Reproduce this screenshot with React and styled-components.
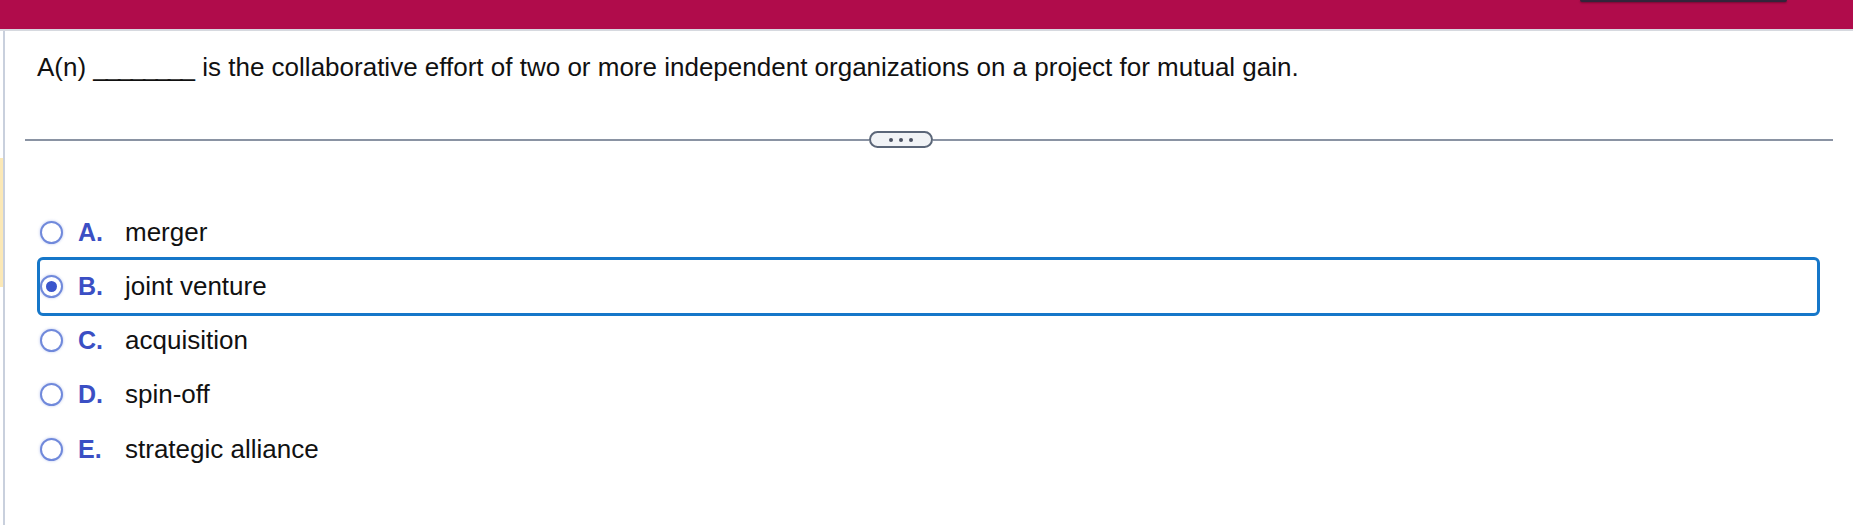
import styled, { createGlobalStyle } from 'styled-components';

const GlobalStyle = createGlobalStyle`
  html, body {
    margin: 0;
    padding: 0;
    background: #fff;
  }
  body {
    font-family: "Liberation Sans", Arial, Helvetica, sans-serif;
    color: #111;
  }
`;

const TopBar = styled.div`
  height: 29px;
  background: #b00c4b;
  border-bottom: 2px solid #d6d9df;
  display: flex;
  justify-content: flex-end;
  padding-right: 66px;
`;

const TabMark = styled.div`
  width: 207px;
  height: 2px;
  background: #33243a;
  border-radius: 0 0 3px 3px;
  box-shadow: 0 1px 2px rgba(0, 0, 0, 0.35);
`;

const Main = styled.div`
  display: flex;
  min-height: 494px;
`;

const Rail = styled.div`
  width: 3px;
  flex: 0 0 3px;
`;

const RailMark = styled.div`
  margin-top: 127px;
  height: 129px;
  background: #fbe8b6;
`;

const Content = styled.div`
  flex: 1;
  border-left: 2px solid #c9d0dd;
  padding: 21px 20px 0 20px;
`;

const Question = styled.p`
  margin: 0 0 0 12px;
  font-size: 26px;
  line-height: 30px;
`;

const Blank = styled.span`
  letter-spacing: -2px;
  margin-right: 2px;
`;

const Separator = styled.div`
  display: flex;
  align-items: center;
  margin-top: 49px;
  height: 17px;
`;

const Line = styled.div`
  height: 2px;
  background: #8a93a3;
  flex: ${(p) => (p.$width ? `0 0 ${p.$width}px` : '1')};
`;

const MoreButton = styled.button`
  width: 64px;
  height: 17px;
  box-sizing: border-box;
  border: 2px solid #5b6678;
  border-radius: 9px;
  background: #f1f3f6;
  padding: 0;
  display: flex;
  align-items: center;
  justify-content: center;
  gap: 6px;
`;

const Dot = styled.span`
  width: 4px;
  height: 4px;
  border-radius: 50%;
  background: #4b5262;
`;

const OptionList = styled.div`
  margin: 57px 15px 0 14px;
  display: flex;
  flex-direction: column;
`;

const OptionRow = styled.label`
  display: flex;
  align-items: center;
  height: 54.25px;
  border-radius: 4px;
  outline: ${(p) => (p.$focused ? '3.5px solid #1677c9' : 'none')};
  outline-offset: -1px;
  cursor: pointer;
`;

const Radio = styled.span`
  box-sizing: border-box;
  width: 23px;
  height: 23px;
  margin-left: 1px;
  border-radius: 50%;
  border: 2px solid #7089db;
  box-shadow: 0 0 2px 1px rgba(120, 145, 225, 0.25);
  display: flex;
  align-items: center;
  justify-content: center;
  background: #fff;
`;

const RadioDot = styled.span`
  width: 11px;
  height: 11px;
  border-radius: 50%;
  background: #3b56cc;
`;

const Letter = styled.span`
  width: 47px;
  margin-left: 15px;
  font-size: 25px;
  font-weight: bold;
  color: #3b4fc4;
`;

const OptionText = styled.span`
  font-size: 26px;
  color: #111;
`;

const options = [
  { key: 'A', text: 'merger' },
  { key: 'B', text: 'joint venture' },
  { key: 'C', text: 'acquisition' },
  { key: 'D', text: 'spin-off' },
  { key: 'E', text: 'strategic alliance' },
];

function App() {
  const selected = 'B';

  return (
    <>
      <GlobalStyle />
      <TopBar>
        <TabMark />
      </TopBar>
      <Main>
        <Rail>
          <RailMark />
        </Rail>
        <Content>
          <Question>
            A(n) <Blank>________</Blank> is the collaborative effort of two or more independent
            organizations on a project for mutual gain.
          </Question>
          <Separator>
            <Line $width={844} />
            <MoreButton aria-label="more">
              <Dot />
              <Dot />
              <Dot />
            </MoreButton>
            <Line />
          </Separator>
          <OptionList>
            {options.map((o) => (
              <OptionRow key={o.key} $focused={o.key === selected}>
                <Radio>{o.key === selected && <RadioDot />}</Radio>
                <Letter>{o.key}.</Letter>
                <OptionText>{o.text}</OptionText>
              </OptionRow>
            ))}
          </OptionList>
        </Content>
      </Main>
    </>
  );
}

export default App;
